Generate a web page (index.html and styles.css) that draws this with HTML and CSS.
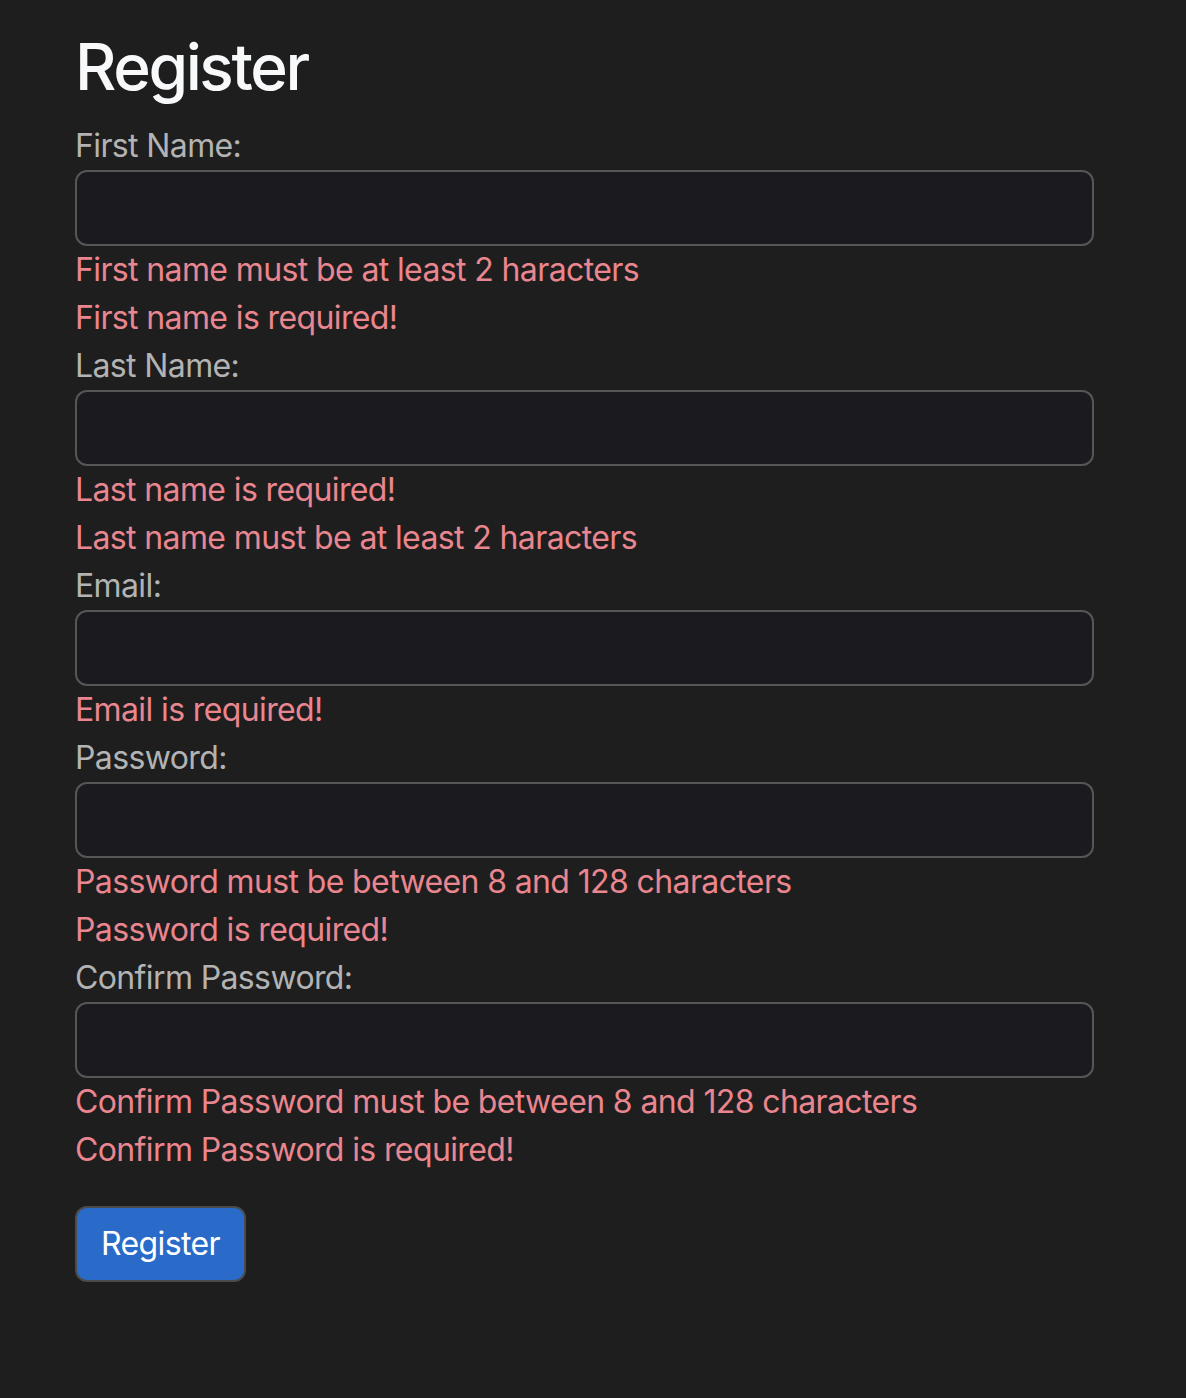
FILE: index.html
```html
<!DOCTYPE html>
<html lang="en">
<head>
<meta charset="utf-8">
<title>Register</title>
<link rel="stylesheet" href="styles.css">
</head>
<body>
<main class="page">
  <h1 class="title">Register</h1>
  <form class="form">
    <div class="field">
      <label class="label" for="first">First Name:</label>
      <input class="input" id="first" type="text">
      <div class="error">First name must be at least 2 haracters</div>
      <div class="error">First name is required!</div>
    </div>
    <div class="field">
      <label class="label" for="last">Last Name:</label>
      <input class="input" id="last" type="text">
      <div class="error">Last name is required!</div>
      <div class="error">Last name must be at least 2 haracters</div>
    </div>
    <div class="field">
      <label class="label" for="email">Email:</label>
      <input class="input" id="email" type="email">
      <div class="error">Email is required!</div>
    </div>
    <div class="field">
      <label class="label" for="pw">Password:</label>
      <input class="input" id="pw" type="password">
      <div class="error">Password must be between 8 and 128 characters</div>
      <div class="error">Password is required!</div>
    </div>
    <div class="field">
      <label class="label" for="cpw">Confirm Password:</label>
      <input class="input" id="cpw" type="password">
      <div class="error">Confirm Password must be between 8 and 128 characters</div>
      <div class="error">Confirm Password is required!</div>
    </div>
    <button class="btn" type="button">Register</button>
  </form>
</main>
</body>
</html>
```
FILE: styles.css
```css
* { box-sizing: border-box; }
html, body {
  margin: 0;
  background: #1e1e1e;
}
body {
  font-family: Inter, "Liberation Sans", sans-serif;
  font-size: 32px;
  line-height: 1.5;
  letter-spacing: -0.62px;
  color: #b3b3b3;
}
.page {
  padding: 29px 0 0 75px;
  width: 1094px;
}
.title {
  margin: 0 0 16px;
  font-size: 64px;
  font-weight: 500;
  line-height: 1.2;
  letter-spacing: -2.4px;
  color: #f8f9fa;
}
.form {
  display: flex;
  flex-direction: column;
  align-items: flex-start;
}
.field {
  display: flex;
  flex-direction: column;
  width: 100%;
}
.label {
  display: block;
  height: 48px;
  color: #b3b3b3;
}
.input {
  display: block;
  width: 100%;
  height: 76px;
  margin: 0;
  padding: 12px 24px;
  font: inherit;
  color: #dee2e6;
  background: #1b1b1f;
  border: 2px solid #565656;
  border-radius: 12px;
  outline: none;
}
.error {
  color: #ea868f;
  height: 48px;
}
.btn {
  margin-top: 32px;
  height: 76px;
  padding: 12px 24px;
  font: inherit;
  letter-spacing: -0.62px;
  color: #ffffff;
  background: #2a6bc9;
  border: 2px solid #4b4b4b;
  border-radius: 12px;
}
```
